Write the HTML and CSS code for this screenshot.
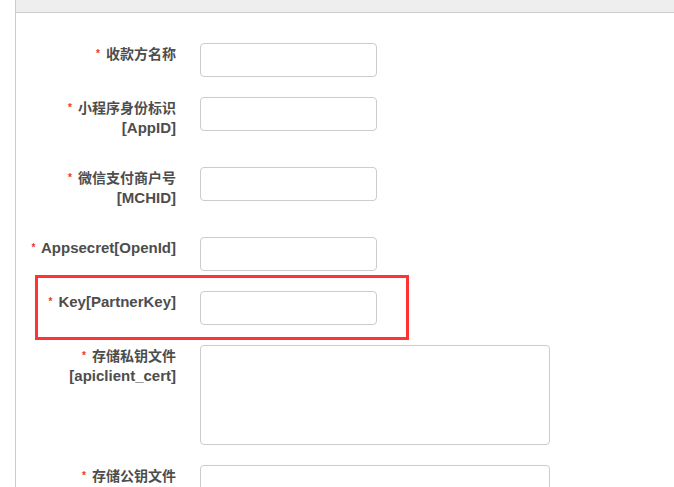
FILE: index.html
```html
<!DOCTYPE html>
<html lang="zh">
<head>
<meta charset="utf-8">
<title>支付配置</title>
<link rel="stylesheet" href="styles.css">
</head>
<body>
<div class="panel">
  <div class="panel-heading"></div>
  <div class="panel-body">
    <div class="form-row">
      <label class="form-label"><span class="req">*</span> <span class="cjk">收款方名称</span></label>
      <input class="form-input" type="text">
    </div>
    <div class="form-row">
      <label class="form-label"><span class="req">*</span> <span class="cjk">小程序身份标识</span><br>[AppID]</label>
      <input class="form-input" type="text">
    </div>
    <div class="form-row">
      <label class="form-label"><span class="req">*</span> <span class="cjk">微信支付商户号</span><br>[MCHID]</label>
      <input class="form-input" type="text">
    </div>
    <div class="form-row">
      <label class="form-label"><span class="req">*</span> Appsecret[OpenId]</label>
      <input class="form-input" type="text">
    </div>
    <div class="form-row">
      <label class="form-label"><span class="req">*</span> Key[PartnerKey]</label>
      <input class="form-input" type="text">
      <span class="highlight"></span>
    </div>
    <div class="form-row">
      <label class="form-label"><span class="req">*</span> <span class="cjk">存储私钥文件</span><br>[apiclient_cert]</label>
      <textarea class="form-textarea"></textarea>
    </div>
    <div class="form-row">
      <label class="form-label"><span class="req">*</span> <span class="cjk">存储公钥文件</span><br>[apiclient_key]</label>
      <textarea class="form-textarea"></textarea>
    </div>
  </div>
</div>
</body>
</html>
```

FILE: styles.css
```css
html, body {
  margin: 0;
  padding: 0;
  background: #fff;
}
body {
  font-family: "Liberation Sans", "Noto Sans CJK SC", sans-serif;
  font-size: 14px;
  color: #4d4d4d;
  overflow: hidden;
}
.panel {
  margin-left: 15px;
  border-left: 1px solid #ccc;
  min-height: 600px;
}
.panel-heading {
  height: 12px;
  background: #eee;
  border-bottom: 1px solid #ccc;
}
.panel-body {
  padding-top: 30px;
}
.form-row {
  display: flex;
  align-items: flex-start;
  gap: 24px;
  margin-bottom: 20px;
  position: relative;
}
.form-label {
  width: 160px;
  flex: none;
  text-align: right;
  font-weight: bold;
  font-size: 15px;
  line-height: 20px;
  padding: 1px 0 9px;
  color: #4d4d4d;
}
.cjk {
  font-size: 14px;
}
.req {
  color: #e33;
  font-size: 10px;
  vertical-align: top;
  position: relative;
  top: 0;
  margin-right: 2px;
}
.form-input {
  width: 177px;
  height: 34px;
  box-sizing: border-box;
  border: 1px solid #ccc;
  border-radius: 4px;
  margin: 0;
  padding: 6px 12px;
  flex: none;
  background: #fff;
}
.form-textarea {
  width: 350px;
  height: 100px;
  box-sizing: border-box;
  border: 1px solid #ccc;
  border-radius: 4px;
  margin: 0;
  padding: 6px 12px;
  resize: none;
  flex: none;
  display: block;
}
.highlight {
  position: absolute;
  left: 19px;
  top: -16px;
  width: 374px;
  height: 65px;
  box-sizing: border-box;
  border: 3px solid #f33;
  pointer-events: none;
}
```
